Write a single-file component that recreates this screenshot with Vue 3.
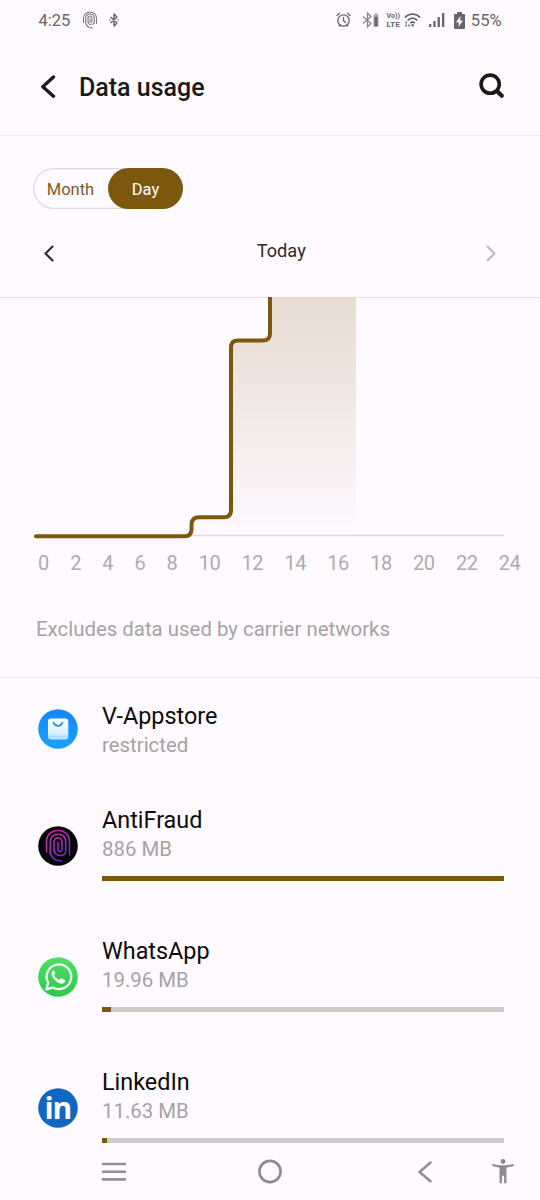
<script setup>
const hours = [0, 2, 4, 6, 8, 10, 12, 14, 16, 18, 20, 22, 24]

const apps = [
  { id: 'store', name: 'V-Appstore', usage: 'restricted', share: null },
  { id: 'fraud', name: 'AntiFraud', usage: '886 MB', share: 100 },
  { id: 'whatsapp', name: 'WhatsApp', usage: '19.96 MB', share: 2.15 },
  { id: 'linkedin', name: 'LinkedIn', usage: '11.63 MB', share: 1.15 },
]
</script>

<template>
  <div class="screen">
    <div class="status">
      <span class="clock">4:25</span>
      <svg class="s-finger" width="16" height="18" viewBox="0 0 32 36" fill="none" stroke="#77747a" stroke-width="2.1" stroke-linecap="round">
        <path d="M3 23V14C3 7 9 2 16 2s13 5 13 12v11" />
        <path d="M7.500 25V14c0-5 4-8 8.500-8s8.500 3 8.500 8v8c0 3-1.500 4.500-4 4.500" />
        <path d="M12 20V14c0-3 2-4 4-4s4 1 4 4v6c0 3-4 3-4 0v-6" />
        <path d="M12 21c0 4 2 6 6 6.500M8 26c2 5 6 8 13 8" />
      </svg>
      <svg class="s-bt" width="10" height="14" viewBox="0 0 10 14" fill="none" stroke="#68656b" stroke-width="1.4" stroke-linejoin="round">
        <path d="M1.500 4l6.500 6L5 13V1l3 3-6.500 6" />
        <path d="M.5 7h1M8.500 7h1" />
      </svg>
      <span class="spacer"></span>
      <svg class="s-alarm" width="15" height="16" viewBox="0 0 15 16" fill="none" stroke="#68656b" stroke-width="1.3" stroke-linecap="round">
        <circle cx="7.500" cy="8.500" r="5.700" />
        <path d="M7.500 5.300v3.500l2 1.700M1 3.500L3.500 1.300M14 3.500L11.500 1.300M3 14l1-1M12 14l-1-1" />
      </svg>
      <svg class="s-btbat" width="17" height="16" viewBox="0 0 17 16">
        <path d="M1 4.500l8 7-3.500 3.300V1.200L9 4.500l-8 7" fill="none" stroke="#88858b" stroke-width="1.300" />
        <rect x="11.500" y="2.500" width="5" height="12.500" rx="1" fill="#aaa7ad" />
        <rect x="13" y="1.200" width="2" height="2" fill="#aaa7ad" />
        <rect x="12.500" y="5" width="3" height="9" fill="#68656b" />
      </svg>
      <svg class="s-volte" width="15" height="20" viewBox="0 0 15 20" fill="#68656b">
        <text x=".5" y="8.300" textLength="13.500" lengthAdjust="spacingAndGlyphs">Vo))</text>
        <text x=".5" y="16.600" textLength="13.500" lengthAdjust="spacingAndGlyphs">LTE</text>
      </svg>
      <svg class="s-wifi" width="17" height="14" viewBox="0 0 17 14" fill="none" stroke="#68656b" stroke-width="1.800">
        <path d="M1 4.600C5 0 12 0 16 4.600" />
        <path d="M3.600 7.500c3-3.200 7-3.200 9.800 0" />
        <path d="M6.300 10.200c1.500-1.500 3.100-1.500 4.500 0" />
        <circle cx="8.600" cy="12.300" r="1.200" fill="#68656b" stroke="none" />
        <path d="M2.200 8.400v2M2.200 11.400v2M5 11.400v2" stroke-width="1.500" />
      </svg>
      <svg class="s-signal" width="16" height="14" viewBox="0 0 16 14" fill="#68656b">
        <rect x="0" y="11" width="2.300" height="3" />
        <rect x="4.300" y="8" width="2.300" height="6" />
        <rect x="8.600" y="4" width="2.300" height="10" />
        <rect x="13" y="0" width="2.300" height="14" />
      </svg>
      <svg class="s-bat" width="11" height="17" viewBox="0 0 11 17">
        <path d="M3 0h5v2h2q1 0 1 1v13q0 1-1 1H1q-1 0-1-1V3q0-1 1-1h2z" fill="#68656b" />
        <path d="M6.500 4L2 10.200h2.900L4.400 15 9 8.500H6z" fill="#fefaff" />
      </svg>
      <span class="percent">55%</span>
    </div>

    <header class="header">
      <svg class="back" width="17" height="24" viewBox="0 0 17 24" fill="none" stroke="#1b1a18" stroke-width="3.400" stroke-linecap="round" stroke-linejoin="round">
        <path d="M14.500 2L3.800 11.700l10.700 9.500" />
      </svg>
      <h1>Data usage</h1>
      <svg class="search" width="26" height="26" viewBox="0 0 26 26" fill="none" stroke="#1b1a18" stroke-width="3.600" stroke-linecap="round">
        <circle cx="11.200" cy="11.200" r="9.100" />
        <path d="M18.200 18.200l4.600 4.600" stroke-width="4.200" />
      </svg>
    </header>

    <section class="period">
      <div class="toggle">
        <span class="opt">Month</span>
        <span class="opt on">Day</span>
      </div>
      <div class="date-row">
        <svg width="10" height="17" viewBox="0 0 10 17" fill="none" stroke="#29272b" stroke-width="2.100" stroke-linecap="round" stroke-linejoin="round">
          <path d="M8.500 1.500l-7 7 7 7" />
        </svg>
        <span class="today">Today</span>
        <svg width="10" height="17" viewBox="0 0 10 17" fill="none" stroke="#b9b5bb" stroke-width="1.900" stroke-linecap="round" stroke-linejoin="round">
          <path d="M1.500 1.500l7 7-7 7" />
        </svg>
      </div>
    </section>

    <section class="usage">
      <svg class="chart" width="540" height="244" viewBox="0 0 540 244">
        <defs>
          <linearGradient id="fade" x1="0" y1="0" x2="0" y2="1">
            <stop offset="0" stop-color="#e6dcd1" />
            <stop offset=".5" stop-color="#f2eae8" />
            <stop offset="1" stop-color="#fefaff" />
          </linearGradient>
        </defs>
        <path d="M270 0h86v238H192V220h39V43h39z" fill="url(#fade)" />
        <path d="M190 238.500h314" stroke="#dedade" stroke-width="1.500" />
        <path d="M36 239.300H184.500Q191.500 239.300 191.500 232.300V228Q191.500 220.300 199 220.300H224Q231 220.300 231 213.300V50.500Q231 43.500 238 43.500H263Q270 43.500 270 36.500V-4" fill="none" stroke="#7c570e" stroke-width="4" stroke-linecap="round" />
      </svg>
      <div class="axis"><span v-for="h in hours" :key="h">{{ h }}</span></div>
      <p class="note">Excludes data used by carrier networks</p>
    </section>

    <ul class="apps">
      <li v-for="app in apps" :key="app.id" :class="['app', { plain: app.share === null }]">
        <svg class="icon" width="40" height="40" viewBox="0 0 40 40">
          <template v-if="app.id === 'store'">
            <defs>
              <linearGradient id="sky" x1="0" y1="0" x2="0" y2="1">
                <stop offset="0" stop-color="#1687f8" />
                <stop offset="1" stop-color="#18a2fc" />
              </linearGradient>
              <linearGradient id="bag" x1="0" y1="0" x2="0" y2="1">
                <stop offset="0" stop-color="#fff" />
                <stop offset=".75" stop-color="#d9effd" />
                <stop offset=".85" stop-color="#a9dcfc" />
                <stop offset="1" stop-color="#c9e9fd" />
              </linearGradient>
            </defs>
            <circle cx="20" cy="20" r="19.800" fill="url(#sky)" />
            <rect x="10" y="9.500" width="20.300" height="21" rx="3" fill="url(#bag)" />
            <path d="M15.500 13.500c1.500 4.500 7.500 4.500 9 0" fill="none" stroke="#2b92f0" stroke-width="1.700" stroke-linecap="round" />
          </template>
          <template v-else-if="app.id === 'fraud'">
            <defs>
              <linearGradient id="neon" gradientUnits="userSpaceOnUse" x1="8" y1="6" x2="32" y2="34">
                <stop offset="0" stop-color="#d42aa4" />
                <stop offset=".5" stop-color="#a62cc4" />
                <stop offset="1" stop-color="#4d2ce0" />
              </linearGradient>
            </defs>
            <circle cx="20" cy="20" r="19.800" fill="#050207" />
            <g fill="none" stroke="url(#neon)" stroke-width="1.500" stroke-linecap="round">
              <path d="M8.500 26V16C8.500 9 13 4.500 20 4.500S31.500 9 31.500 16v13" />
              <path d="M12.300 28V16.500c0-5.500 3-8.300 7.700-8.300s7.700 2.800 7.700 8.300v8c0 3.500-2 5-5 5" />
              <path d="M16 23.500v-7c0-3.200 1.500-4.600 4-4.600s4 1.400 4 4.600v6.500c0 3.500-4 3.500-4 0v-6.500" />
              <path d="M16 23.500c0 3.500 2.500 5.800 6.500 6M12.300 28c2 4.500 6 7 11.500 7" />
            </g>
          </template>
          <template v-else-if="app.id === 'whatsapp'">
            <defs>
              <linearGradient id="leaf" x1="0" y1="0" x2="0" y2="1">
                <stop offset="0" stop-color="#4fdf68" />
                <stop offset="1" stop-color="#2bc94b" />
              </linearGradient>
            </defs>
            <circle cx="20" cy="20" r="19.800" fill="url(#leaf)" />
            <path d="M8.400 32.300l1.800-6.500A12.300 12.300 0 1 1 14.900 30.500z" fill="none" stroke="#f5fff6" stroke-width="2.300" stroke-linejoin="round" />
            <path d="M15.300 13.500c-1.800.8-2.300 2.900-1.500 4.900 1.500 3.900 4.600 7 8.700 8.200 2.100.6 4.200-.4 4.600-2.300.2-1-.1-1.300-.7-1.600l-2.700-1.300c-.6-.2-.9-.1-1.300.4l-1 1.200c-2.500-.9-4.300-2.600-5.400-4.900l.9-1.100c.4-.5.400-.8.200-1.300l-1-2.100c-.2-.4-.5-.4-.8-.1z" fill="#f5fff6" />
          </template>
          <template v-else>
            <circle cx="20" cy="20" r="19.800" fill="#0f67c2" />
            <text class="in" x="19.700" y="31.300" text-anchor="middle">in</text>
          </template>
        </svg>
        <div class="info">
          <div class="name">{{ app.name }}</div>
          <div class="amount">{{ app.usage }}</div>
          <div v-if="app.share !== null" class="bar">
            <div class="fill" :style="{ width: app.share + '%' }"></div>
          </div>
        </div>
      </li>
    </ul>

    <nav class="nav">
      <svg class="n-menu" width="26" height="20" viewBox="0 0 26 20" stroke="#929094" stroke-width="2.600" stroke-linecap="round">
        <path d="M2 2h22M2 9.700h22M2 17.400h22" />
      </svg>
      <svg class="n-home" width="26" height="26" viewBox="0 0 26 26" fill="none" stroke="#8d8b8f" stroke-width="2.600">
        <circle cx="13" cy="12.500" r="10.600" />
      </svg>
      <svg class="n-back" width="16" height="24" viewBox="0 0 16 24" fill="none" stroke="#929094" stroke-width="2.600" stroke-linecap="round" stroke-linejoin="round">
        <path d="M13.500 2.500L2.500 11.900l11 9.300" />
      </svg>
      <svg class="n-person" width="22" height="26" viewBox="0 0 22 26" fill="#8d8b8f">
        <circle cx="11" cy="2.500" r="2.400" />
        <path d="M.6 4.900L7.500 6.200h7l6.900-1.300.4 2L14.500 8.700V24.200h-2.400v-7.500H9.900v7.500H7.500V8.700L.2 6.900z" />
      </svg>
    </nav>
  </div>
</template>

<style>
body {
  background: #fefaff;
}
</style>

<style scoped>
.screen {
  position: relative;
  width: 540px;
  height: 1200px;
  overflow: hidden;
  background: #fefaff;
  font-family: Roboto, "Liberation Sans", sans-serif;
  color: #111;
}
.status {
  display: flex;
  align-items: center;
  box-sizing: border-box;
  height: 40px;
  padding: 0 38.5px 0 38.5px;
  color: #68656b;
  font-size: 16.5px;
}
.s-finger { margin-left: 11.5px; }
.s-bt { margin-left: 11px; }
.spacer { flex: 1; }
.s-btbat { margin-left: 11px; }
.s-volte {
  margin-left: 7px;
  font-size: 7px;
  font-weight: 700;
}
.s-wifi { margin-left: 3px; }
.s-signal { margin-left: 8.5px; }
.s-bat { margin-left: 8.5px; }
.percent { margin-left: 6px; }
.header {
  display: flex;
  align-items: center;
  box-sizing: border-box;
  height: 96px;
  padding: 0 35.500px 1px 39px;
  border-bottom: 1px solid #efe9ee;
}
.search { margin-top: -3px; }
h1 {
  flex: 1;
  margin: 2px 0 0 23px;
  font-size: 25px;
  font-weight: 500;
  line-height: 30px;
  color: #1b1a18;
}
.period {
  display: flex;
  flex-direction: column;
  box-sizing: border-box;
  height: 162px;
  padding: 32px 44px 0 33px;
  border-bottom: 1px solid #e6e1e6;
}
.toggle {
  display: flex;
  box-sizing: border-box;
  width: 150px;
  height: 41px;
  border-radius: 21px;
  box-shadow: inset 0 0 0 1.300px #e0dae0;
}
.opt {
  width: 75px;
  line-height: 43px;
  text-align: center;
  font-size: 16.5px;
  color: #7c5d1e;
}
.on {
  border-radius: 21px;
  background: #7c570e;
  color: #fff;
}
.date-row {
  display: flex;
  align-items: center;
  justify-content: space-between;
  margin: 30px 0 0 11px;
  height: 27px;
}
.date-row svg { margin-top: 2px; }
.today {
  margin: -4px 0 0 22.5px;
  font-size: 18.2px;
  color: #2b292d;
}
.usage {
  display: flex;
  flex-direction: column;
  box-sizing: border-box;
  height: 380px;
  border-bottom: 1px solid #efe9ee;
}
.chart { display: block; margin-top: -1px; }
.axis {
  display: flex;
  gap: 21.400px;
  margin: 10px 0 0 38px;
  font-size: 20px;
  letter-spacing: -.5px;
  line-height: 24px;
  color: #aeabb0;
}
.note {
  margin: 42px 0 0 36px;
  font-size: 20.420px;
  line-height: 24px;
  color: #a5a2a7;
}
.apps {
  margin: 0;
  padding: 0;
  list-style: none;
}
.app {
  display: flex;
  align-items: center;
  box-sizing: border-box;
  height: 131px;
  padding: 0 36px 6px 38px;
}
.app.plain {
  height: 103px;
  padding: 3px 36px 0 38px;
}
.icon {
  flex: none;
  margin-top: 4px;
}
.plain .icon { margin-top: -4px; }
.info {
  flex: 1;
  margin-left: 24px;
}
.name {
  font-size: 23.400px;
  line-height: 29px;
  color: #0c0b0d;
}
.amount {
  font-size: 20.400px;
  line-height: 29px;
  color: #a5a2a7;
}
.bar {
  height: 5.500px;
  margin-top: 12px;
  background: #cfcbcb;
}
.fill {
  height: 100%;
  background: #7c570e;
}
.in {
  font-family: "Open Sans", "Noto Sans", sans-serif;
  font-size: 30px;
  font-weight: 700;
  letter-spacing: -1.200px;
  fill: #fff;
}
.nav {
  position: absolute;
  left: 0;
  bottom: 0;
  display: flex;
  align-items: center;
  box-sizing: border-box;
  width: 540px;
  height: 57px;
  padding-left: 101px;
  background: #fefaff;
}
.n-home { margin-left: 130px; }
.n-back { margin-left: 134px; }
.n-person { margin-left: 59px; }
</style>
